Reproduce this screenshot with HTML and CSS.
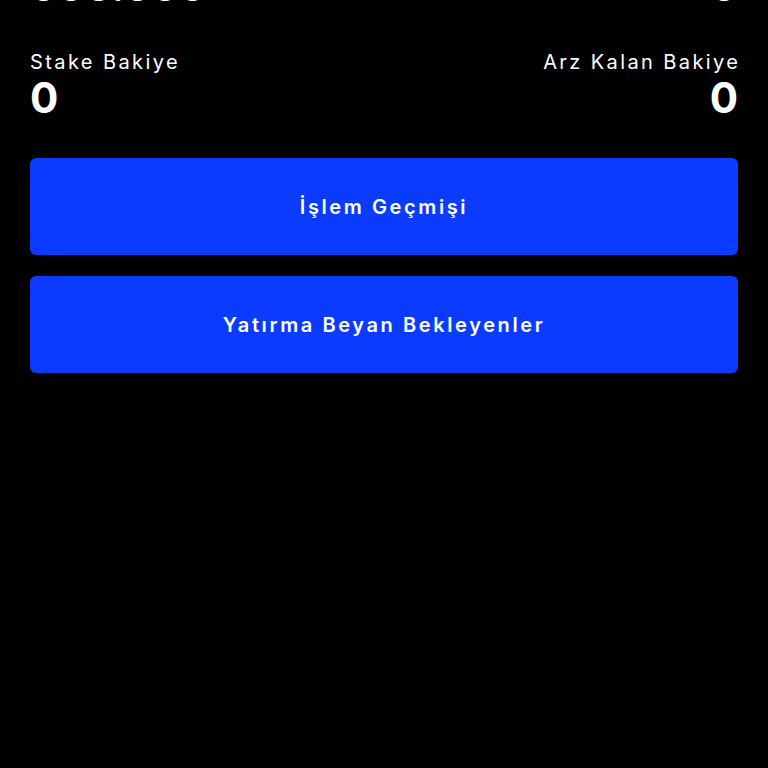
FILE: index.html
```html
<!DOCTYPE html>
<html lang="tr">
<head>
<meta charset="utf-8">
<title>Bakiye</title>
<link rel="stylesheet" href="styles.css">
</head>
<body>
<main class="page">
  <div class="total-row">
    <span class="total-value">000.000</span>
    <span class="total-value">0</span>
  </div>
  <section class="balances">
    <div class="balance">
      <div class="balance-label">Stake Bakiye</div>
      <div class="balance-value">0</div>
    </div>
    <div class="balance balance-right">
      <div class="balance-label">Arz Kalan Bakiye</div>
      <div class="balance-value">0</div>
    </div>
  </section>
  <nav class="actions">
    <button class="action-btn" type="button">İşlem Geçmişi</button>
    <button class="action-btn" type="button">Yatırma Beyan Bekleyenler</button>
  </nav>
</main>
</body>
</html>
```
FILE: styles.css
```css
html, body {
  margin: 0;
  padding: 0;
  background: #000;
  height: 100%;
}
body {
  color: #fff;
  font-family: Inter, "Noto Sans", "DejaVu Sans", sans-serif;
  overflow: hidden;
}
.page {
  padding: 0 30px;
}
.total-row {
  display: flex;
  justify-content: space-between;
  margin-top: -33px;
  height: 40px;
}
.total-value {
  font-size: 40px;
  line-height: 40px;
  font-weight: 700;
  letter-spacing: 0.5px;
}
.balances {
  display: flex;
  justify-content: space-between;
  margin-top: 43px;
}
.balance-right {
  text-align: right;
}
.balance-label {
  font-size: 20px;
  line-height: 24px;
  font-weight: 400;
  letter-spacing: 2.4px;
}
.balance-right .balance-label {
  margin-right: -2.4px;
}
.balance-value {
  margin-top: 2px;
  font-size: 42px;
  line-height: 44px;
  font-weight: 700;
}
.actions {
  display: flex;
  flex-direction: column;
  gap: 21px;
  margin-top: 38px;
}
.action-btn {
  display: block;
  width: 100%;
  height: 97px;
  border: 0;
  border-radius: 6px;
  background: #0a3bff;
  color: #fff;
  font-family: inherit;
  font-size: 20px;
  font-weight: 600;
  letter-spacing: 2.6px;
  padding: 0;
  cursor: pointer;
}
```
